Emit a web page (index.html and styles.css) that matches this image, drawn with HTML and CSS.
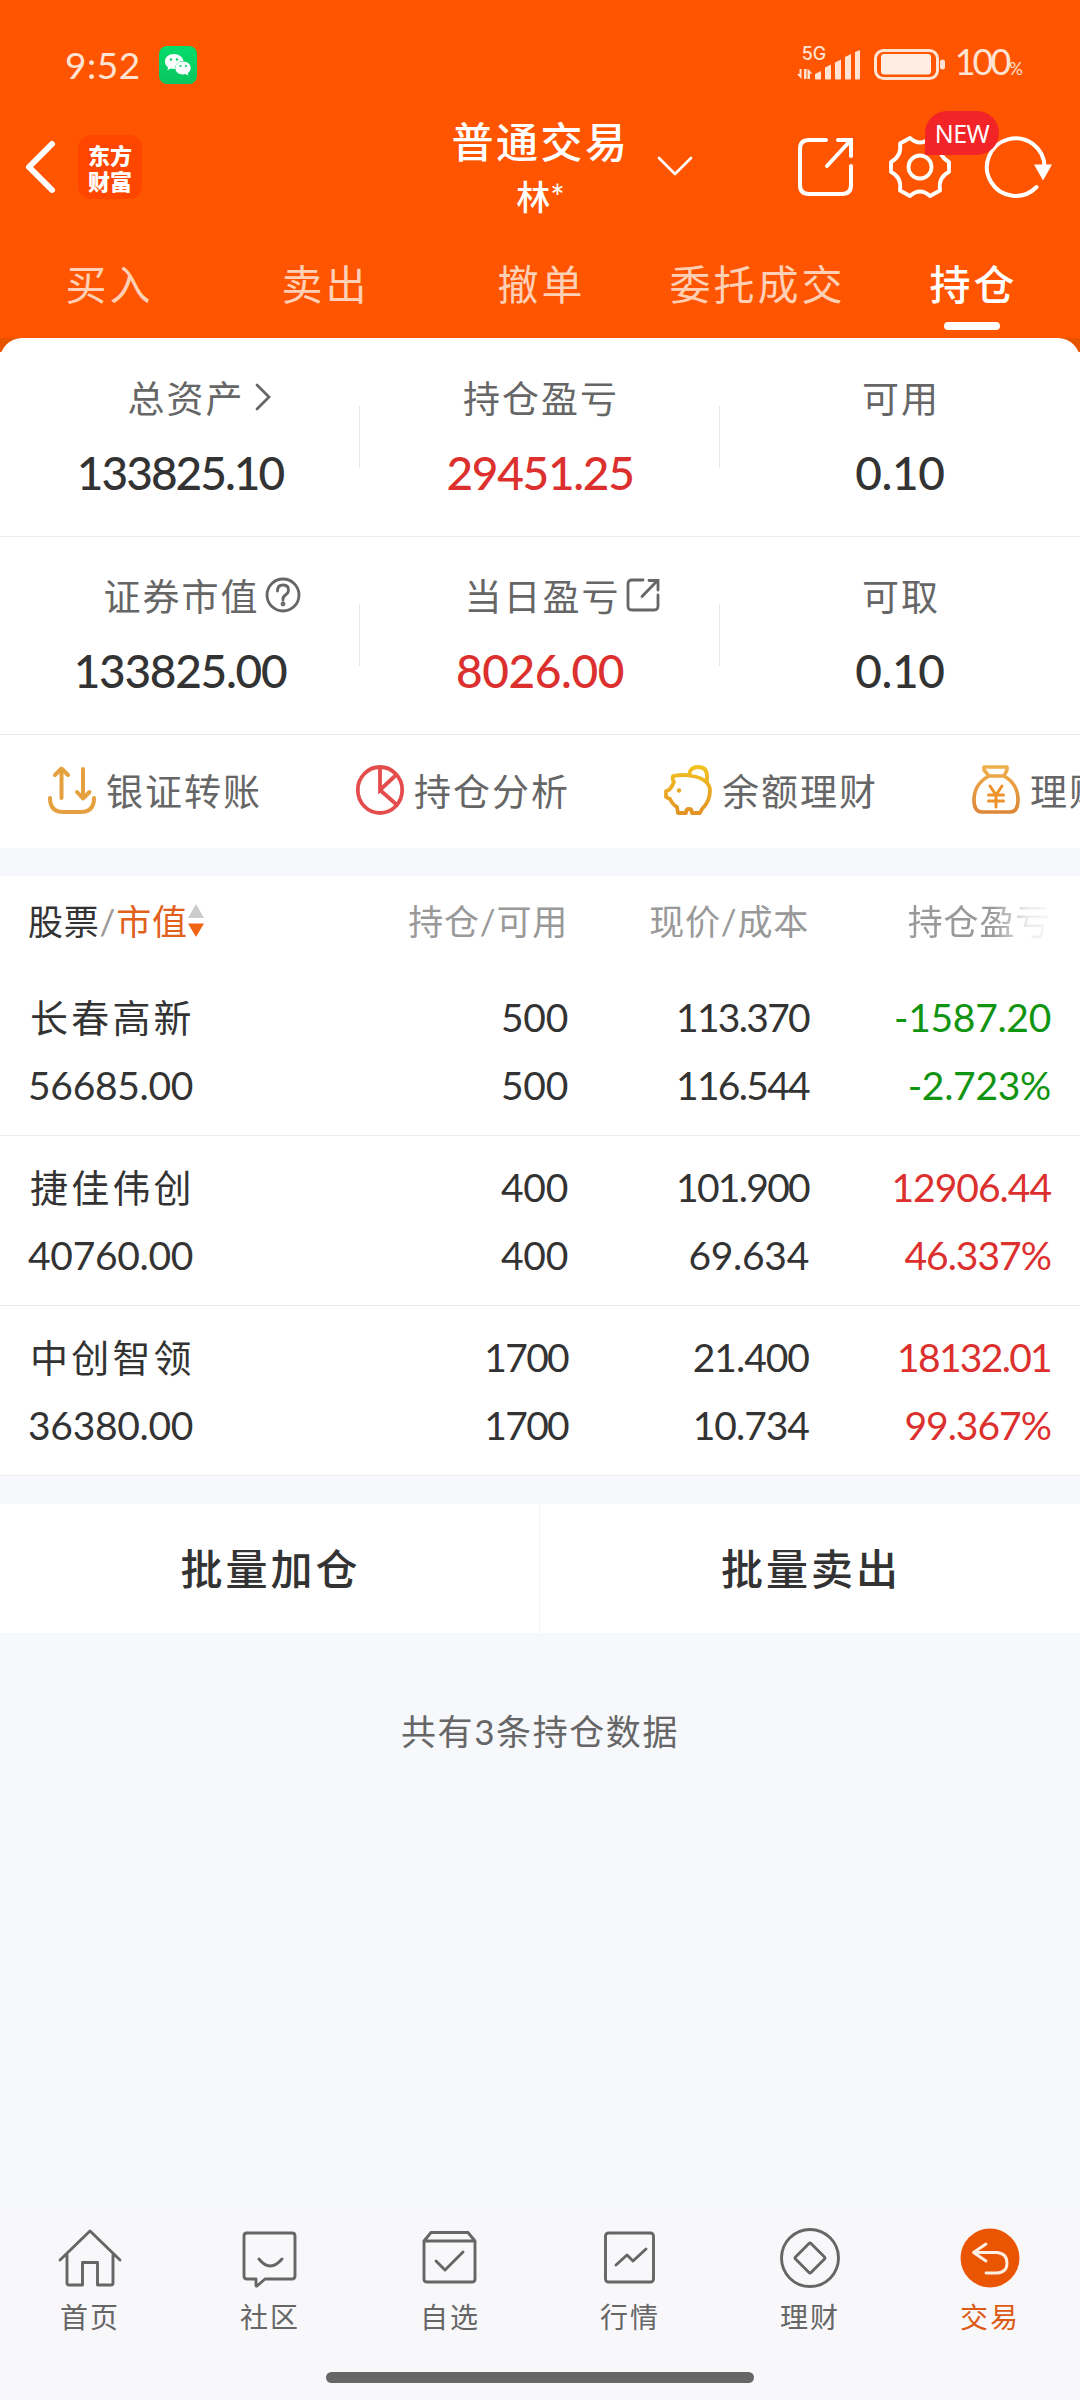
FILE: index.html
```html
<!DOCTYPE html>
<html lang="zh-CN">
<head>
<meta charset="utf-8">
<title>普通交易</title>
<link rel="stylesheet" href="styles.css">
</head>
<body>
<div class="screen">
  <header class="top">
    <div class="status">
      <span class="clock">9:52</span>
      <svg class="wechat" width="38" height="38" viewBox="0 0 38 38">
        <defs><linearGradient id="wg" x1="0" y1="0" x2="0" y2="1"><stop offset="0" stop-color="#04dc6b"/><stop offset="1" stop-color="#0bc660"/></linearGradient></defs>
        <rect width="38" height="38" rx="8" fill="url(#wg)"/>
        <path d="M15 8c-5.200 0-9 3.300-9 7.600 0 2.300 1.200 4.300 3 5.700l-.5 3 3.300-1.700c1 .3 2 .5 3.200.5h.8c0-5 3.700-8.200 8.700-8.200C23.700 11 19.800 8 15 8z" fill="#fff"/>
        <path d="M24 15.500c-4.400 0-7.700 2.800-7.700 6.500s3.300 6.500 7.700 6.500c1 0 1.800-.1 2.600-.4l2.700 1.400-.5-2.500c1.800-1.200 2.900-3 2.900-5 0-3.700-3.300-6.500-7.700-6.500z" fill="#fff"/>
        <g fill="#06d066"><circle cx="12" cy="13.500" r="1.200"/><circle cx="18" cy="13.500" r="1.200"/><circle cx="21.500" cy="20" r="1.100"/><circle cx="27" cy="20" r="1.100"/></g>
      </svg>
      <div class="signal">
        <span class="net">5G</span>
        <svg width="64" height="30" viewBox="0 0 64 30" fill="#ffe3d3">
          <path d="M4.500 19v10L0 24h2.500v-5zM7 19h2.500v10H7zM10.500 18.500l5 5h-2.500V29h-2.500z"/>
          <path d="M18 24l6-3v8q0 .5-1 .5h-4q-1 0-1-1zM28 17.500l6-3v14q0 1-1 1h-4q-1 0-1-1zM38 12.500l6-3v19q0 1-1 1h-4q-1 0-1-1zM48 7l6-3v24.500q0 1-1 1h-4q-1 0-1-1zM58 2l5-2v28.500q0 1-1 1h-3q-1 0-1-1z"/>
        </svg>
      </div>
      <svg class="battery" width="72" height="32" viewBox="0 0 72 32">
        <rect x="1.500" y="1.500" width="62" height="28" rx="8" fill="none" stroke="#ffe3d3" stroke-width="3"/>
        <rect x="7" y="5" width="50" height="20.500" rx="3" fill="#ffede3"/>
        <rect x="66" y="10.500" width="5" height="10" rx="2.500" fill="#ffe3d3"/>
      </svg>
      <span class="pct">100<small>%</small></span>
    </div>
    <div class="bar">
      <div class="left">
        <svg width="34" height="54" viewBox="0 0 34 54" fill="none" stroke="#fff" stroke-width="6" stroke-linecap="round" stroke-linejoin="round"><path d="M29 4L6 27l23 23"/></svg>
        <div class="logo"><span>东方</span><span>财富</span></div>
      </div>
      <div class="title"><b>普通交易</b><span>林*</span></div>
      <svg class="drop" width="36" height="20" viewBox="0 0 36 20" fill="none" stroke="#fff" stroke-width="2.600" stroke-linecap="round" stroke-linejoin="round"><path d="M2 2l16 16L34 2"/></svg>
      <div class="actions">
        <svg width="56" height="60" viewBox="0 0 56 60" fill="none" stroke="#fff" stroke-width="4" stroke-linecap="round"><path d="M28 3H11q-9 0-9 9v36q0 9 9 9h33q9 0 9-9V29M40 3h13v16M52 4L29 29"/></svg>
        <div class="gear">
          <svg width="64" height="64" viewBox="0 0 64 64" fill="none" stroke="#fff" stroke-width="3.800" stroke-linejoin="round"><path d="M22 3Q32 12 42 3L52 8.500Q50 21 61 27v10Q50 42 52 55.500L42 61Q32 52 22 61L12 55.500Q14 42 3 37V27Q14 21 12 8.500z"/><circle cx="32" cy="32" r="11.500"/></svg>
          <em>NEW</em>
        </div>
        <svg width="68" height="64" viewBox="0 0 68 64"><path d="M60.500 32A28.800 28.800 0 1 0 52.500 52" fill="none" stroke="#fff" stroke-width="4" stroke-linecap="round"/><path d="M50 29.500h18l-9 16z" fill="#fff"/></svg>
      </div>
    </div>
    <nav class="tabs"><a>买入</a><a>卖出</a><a>撤单</a><a>委托成交</a><a class="on">持仓</a></nav>
  </header>

  <div class="sheet-back">
  <section class="summary">
    <div class="cell"><div class="label assets">总资产<svg class="hang arrow" width="16" height="28" viewBox="0 0 16 28"><path d="M2 2l12 12L2 26"/></svg></div><div class="value s1">133825.10</div></div>
    <div class="cell"><div class="label">持仓盈亏</div><div class="value up s2">29451.25</div></div>
    <div class="cell"><div class="label">可用</div><div class="value">0.10</div></div>
  </section>
  </div>
  <section class="summary second">
    <div class="cell"><div class="label">证券市值<svg class="hang" width="36" height="36" viewBox="0 0 36 36"><circle cx="18" cy="18" r="16"/><path d="M12.500 14q0-6 5.500-6t5.500 5q0 3-3 5t-2.500 5"/><circle cx="18" cy="27" r="1" /></svg></div><div class="value s3">133825.00</div></div>
    <div class="cell"><div class="label">当日盈亏<svg class="hang" width="34" height="34" viewBox="0 0 34 34"><path d="M17 2H6Q2 2 2 6v22q0 4 4 4h22q4 0 4-4V17M23 2.500h9V12M31 3L16 18.500"/></svg></div><div class="value up">8026.00</div></div>
    <div class="cell"><div class="label">可取</div><div class="value">0.10</div></div>
  </section>

  <section class="links">
    <div><svg width="48" height="50" viewBox="0 0 48 50" fill="none" stroke="#e5a040" stroke-width="4" stroke-linecap="round" stroke-linejoin="round"><path d="M2 33q0 14 13 14h18q13 0 13-14M13.500 33V4M7 10l6.500-6.500L20 10M35 4v29M29 27l6 6.500 6.500-6.500"/></svg>银证转账</div>
    <div><svg width="48" height="50" viewBox="0 0 48 50" fill="none" stroke="#e54d4d" stroke-width="3.800" stroke-linecap="round"><ellipse cx="24" cy="25" rx="22.200" ry="23"/><path d="M24 2v23l16-15M24 25l17 15"/></svg>持仓分析</div>
    <div><svg width="48" height="50" viewBox="0 0 48 50" fill="none" stroke="url(#gold)" stroke-width="3.800" stroke-linecap="round" stroke-linejoin="round"><defs><linearGradient id="gold" gradientUnits="userSpaceOnUse" x1="0" y1="0" x2="0" y2="50"><stop offset="0" stop-color="#f2c31e"/><stop offset="1" stop-color="#e29226"/></linearGradient></defs><path d="M28 11q-8-2-19 0-1 3 1 6-2 5-5 8l-3 1v6l4 2q3 6 7 8l1 6h8q0-4 3-4t3 4h8l2-4Q46 36 46 26 46 14 28 11zM25 10Q26 2 34 2q9 0 9 9v5"/><circle cx="15" cy="25.500" r="2.200" fill="#eaa823" stroke="none"/></svg>余额理财</div>
    <div><svg width="48" height="50" viewBox="0 0 48 50" fill="none" stroke="url(#bag)" stroke-width="3.600" stroke-linecap="round" stroke-linejoin="round"><defs><linearGradient id="bag" gradientUnits="userSpaceOnUse" x1="0" y1="0" x2="0" y2="50"><stop offset="0" stop-color="#efb04c"/><stop offset="1" stop-color="#dd8436"/></linearGradient></defs><path d="M12 2h23v3l-3 6H17l-5-6zM17 11Q2 19 2 35q0 12 8 12h28q8 0 8-12Q46 19 32 11"/><path d="M18 21l6 9 6-9M16.500 30h15M16.500 36h15M24 30v12" stroke="#ee922c" stroke-width="3"/></svg>理财产品</div>
  </section>

  <section class="holdings">
    <div class="row head">
      <div class="name">股票<i>/</i><b>市值</b><svg width="16" height="34" viewBox="0 0 16 34"><path d="M8 0l8 14H0z" fill="#ccc"/><path d="M0 19.500h16L8 33z" fill="#f06414"/></svg></div>
      <div>持仓/可用</div><div>现价/成本</div><div class="fade">持仓盈亏</div>
    </div>
    <div class="row">
      <div class="name"><span>长春高新</span><span class="n">56685.00</span></div>
      <div class="n"><span>500</span><span>500</span></div>
      <div class="n"><span class="t2">113.370</span><span class="t2">116.544</span></div>
      <div class="n down"><span>-1587.20</span><span>-2.723%</span></div>
    </div>
    <div class="row">
      <div class="name"><span>捷佳伟创</span><span class="n">40760.00</span></div>
      <div class="n"><span>400</span><span>400</span></div>
      <div class="n"><span class="t2">101.900</span><span>69.634</span></div>
      <div class="n up"><span class="t1">12906.44</span><span class="t1">46.337%</span></div>
    </div>
    <div class="row">
      <div class="name"><span>中创智领</span><span class="n">36380.00</span></div>
      <div class="n"><span class="t2">1700</span><span class="t2">1700</span></div>
      <div class="n"><span class="t1">21.400</span><span class="t1">10.734</span></div>
      <div class="n up"><span class="t2">18132.01</span><span class="t1">99.367%</span></div>
    </div>
  </section>

  <section class="batch"><div>批量加仓</div><div>批量卖出</div></section>
  <p class="count">共有3条持仓数据</p>

  <footer class="dock">
    <a><svg width="64" height="64" viewBox="0 0 64 64"><path d="M2 33L32 4l30 29M9 28v28q0 2 2 2h13.500V35.500h15V58H53q2 0 2-2V28"/></svg>首页</a>
    <a><svg width="64" height="64" viewBox="0 0 64 64"><path d="M8 6h46q3 0 3 3v40q0 3-3 3H27l-8 7q-1 .5-1-1v-6H9q-3 0-3-3V9q0-3 3-3M21 32q11 14 23 0"/></svg>社区</a>
    <a><svg width="64" height="64" viewBox="0 0 64 64"><path d="M6 14l7-8.500h37l7 8.500v38q0 3-3 3H9q-3 0-3-3zM6 14h51M18 34l9 9 18-18"/></svg>自选</a>
    <a><svg width="64" height="64" viewBox="0 0 64 64"><rect x="7.500" y="6" width="48" height="49" rx="3"/><path d="M18 38l11-10 6 6 13-12"/></svg>行情</a>
    <a><svg width="64" height="64" viewBox="0 0 64 64"><circle cx="32" cy="31" r="28.500"/><path d="M31 16.500L17.500 30q-1 1 0 2L31 45.500q1 1 2 0L46.500 32q1-1 0-2L33 16.500q-1-1-2 0z"/></svg>理财</a>
    <a class="on"><svg width="64" height="64" viewBox="0 0 64 64"><circle cx="32" cy="31" r="29.500" fill="#ea5504" stroke="none"/><path stroke="#fff0e3" d="M28 17L15.500 25.500 28 34M16 25.500h23q10 1 10 10.500T39 46H28"/></svg>交易</a>
  </footer>
  <div class="home"></div>
</div>
</body>
</html>
```
FILE: styles.css
```css
* { box-sizing: border-box; }
body { margin: 0; background: #f6f8fb; font-family: Lato, "Noto Sans CJK SC", sans-serif; color: #333; }
svg { display: block; flex: none; overflow: visible; }
.screen { width: 1080px; height: 2400px; overflow: hidden; display: flex; flex-direction: column; }

.top { background: #ff5500; height: 338px; flex: none; color: #fff; }
.status { height: 98px; padding: 32px 57px 0 65px; display: flex; align-items: center; color: #ffe3d3; }
.clock { font-size: 37px; line-height: 40px; letter-spacing: 0.5px; width: 94px; white-space: nowrap; }
.signal { margin-left: auto; margin-right: 13px; display: flex; position: relative; }
.net { position: absolute; left: 5px; top: -6px; font: 500 18px/20px Inter, sans-serif; }
.battery { margin-right: 9px; }
.pct { font-size: 36px; line-height: 40px; letter-spacing: -3px; white-space: nowrap; }
.pct small { font-size: 17px; letter-spacing: 0; margin-left: 1px; }

.bar { height: 138px; display: grid; grid-template-columns: 1fr 172px 1fr; align-items: center; padding: 0 28px 0 23px; position: relative; }
.left { display: flex; align-items: center; gap: 21px; }
.logo { width: 64px; height: 64px; border-radius: 13px; background: #ff4600; display: flex; flex-direction: column; align-items: center; justify-content: center; font: 900 22px/26px "Noto Sans CJK SC", sans-serif; }
.title { display: flex; flex-direction: column; align-items: center; grid-column: 2; padding-left: 6px; }
.title b { font-size: 42px; font-weight: 500; letter-spacing: 2.500px; line-height: 60px; white-space: nowrap; }
.title span { font-size: 34px; line-height: 50px; font-weight: 500; }
.drop { position: absolute; left: 657px; top: 58px; }
.actions { grid-column: 3; justify-self: end; display: flex; align-items: center; gap: 34px; }
.gear { position: relative; margin-right: -2px; }
.gear em { position: absolute; left: 37px; top: -24px; width: 74px; height: 44px; border-radius: 22px 22px 22px 0; background: #f22427; font: 25px/44px "Noto Sans", sans-serif; text-align: center; z-index: 1; letter-spacing: -0.5px; }

.tabs { display: grid; grid-template-columns: repeat(5, 216px); height: 102px; }
.tabs a { text-align: center; font-size: 41px; letter-spacing: 3px; line-height: 98px; color: #ffd0b5; position: relative; padding-left: 3px; }
.tabs .on { color: #fff; font-weight: 500; }
.tabs .on::after { content: ""; position: absolute; left: 80px; top: 86px; width: 56px; height: 8px; border-radius: 4px; background: #fff; }

.sheet-back { background: linear-gradient(#e65400 14px, #fff 14px); flex: none; }
.summary { height: 199px; display: grid; grid-template-columns: repeat(3, 360px); background: #fff; border-radius: 22px 22px 0 0; border-bottom: 1px solid #ebebeb; padding-top: 35px; flex: none; }
.summary.second { height: 198px; border-radius: 0; padding-top: 34px; }
.cell { position: relative; display: flex; flex-direction: column; align-items: center; }
.cell:not(:last-child)::after { content: ""; position: absolute; right: 0; top: 33px; width: 1px; height: 62px; background: #e6e6e6; }
.label { display: flex; align-items: center; height: 48px; padding-left: 2px; font-size: 37px; letter-spacing: 2px; color: #666; white-space: nowrap; }
.label.assets { padding-left: 10px; }
.hang { fill: none; stroke: #666; stroke-width: 2.800; stroke-linecap: round; margin: 0 -42px 0 5px; }
.hang.arrow { margin: 0 -28px 0 10px; }
.value { font-size: 46px; line-height: 60px; margin-top: 22px; letter-spacing: -0.4px; font-weight: 500; }
.s1 { letter-spacing: -2px; }
.s2, .s3 { letter-spacing: -1.300px; }
.up { color: #dc302e; }
.down { color: #119411; }

.links { height: 113px; background: #fff; padding: 0 0 3px 48px; display: flex; flex: none; overflow: hidden; }
.links div { width: 308px; flex: none; display: flex; align-items: center; gap: 10px; font-size: 37px; letter-spacing: 2px; color: #666; white-space: nowrap; }

.holdings { margin-top: 28px; background: #fff; flex: none; }
.row { height: 170px; border-bottom: 1px solid #ebebeb; padding: 19px 29px 0 28px; display: grid; grid-template-columns: 300px 240px 241px 242px; text-align: right; }
.row > div { display: flex; flex-direction: column; white-space: nowrap; }
.row span { font-size: 38px; letter-spacing: 3.200px; line-height: 67px; }
.row span:first-child { margin-top: -1px; margin-bottom: 1px; }
.row .name span:first-child { padding-left: 2px; }
.row .n, .row .n span, .row .name .n { font-size: 39px; letter-spacing: -0.300px; }
.row .n .t1 { letter-spacing: -1px; }
.row .n .t2 { letter-spacing: -1.700px; }
.name { text-align: left; }
.row.head { height: 90px; border: 0; padding-top: 0; line-height: 90px; font-size: 35px; letter-spacing: 0.800px; color: #999; }
.row.head .name { flex-direction: row; align-items: center; color: #333; }
.head i { color: #999; font-style: normal; }
.head b { font-weight: 400; color: #e0601c; }
.fade { -webkit-mask-image: linear-gradient(90deg, #000 76%, rgba(0,0,0,.2) 90%, rgba(0,0,0,.06)); mask-image: linear-gradient(90deg, #000 76%, rgba(0,0,0,.2) 90%, rgba(0,0,0,.06)); }

.batch { margin-top: 28px; height: 129px; background: #fff; display: grid; grid-template-columns: 1fr 1fr; text-align: center; font-size: 42px; font-weight: 500; letter-spacing: 3px; line-height: 130px; flex: none; }
.batch div { padding-left: 2px; }
.batch div:first-child { border-right: 1px solid #f3f3f5; }
.count { margin: 72px 0 0; text-align: center; font-size: 35px; letter-spacing: 1.600px; line-height: 52px; color: #666; }

.dock { margin-top: auto; height: 162px; flex: none; display: grid; grid-template-columns: repeat(6, 180px); background: #f8f8fb; padding-top: 17px; }
.dock a { display: flex; flex-direction: column; align-items: center; font-size: 28px; letter-spacing: 2px; line-height: 40px; color: #666; }
.dock svg { fill: none; stroke: #666; stroke-width: 2.900; stroke-linecap: round; stroke-linejoin: round; margin-bottom: 6px; }
.dock .on { color: #dc5a14; }
.home { height: 28px; flex: none; background: #f8f8fb; }
.home::before { content: ""; display: block; width: 428px; height: 11px; border-radius: 6px; background: #666; margin: 0 auto; }
```
